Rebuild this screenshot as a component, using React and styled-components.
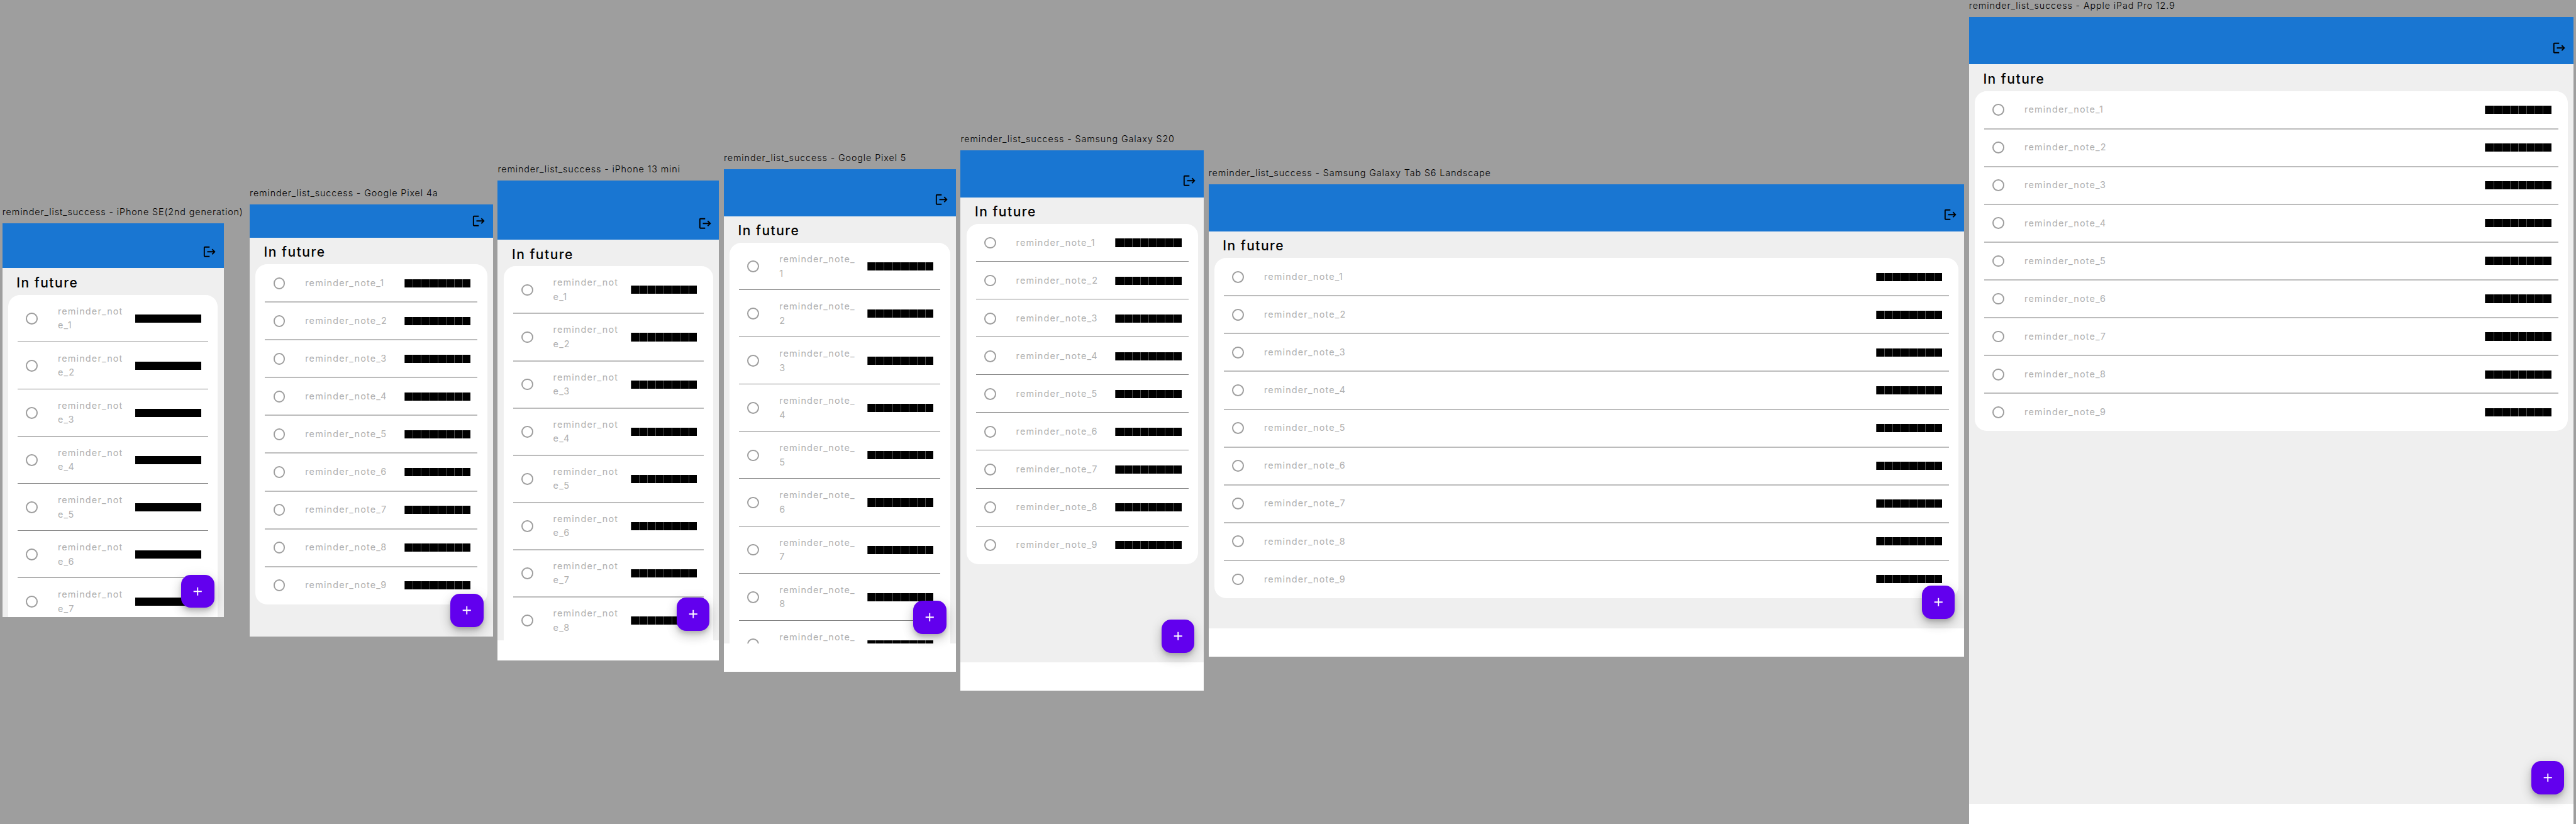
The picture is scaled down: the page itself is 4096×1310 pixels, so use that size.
import React from "react";
import styled, { createGlobalStyle } from "styled-components";

const SCALE = 4096 / 4363;
const u = (n) => `${+(n * SCALE).toFixed(3)}px`;

const GlobalStyle = createGlobalStyle`
  html, body { margin: 0; padding: 0; background: #9e9e9e; overflow: hidden; }
  * { box-sizing: border-box; }
`;

const Board = styled.main`
  display: flex;
  align-items: center;
  width: 4096px;
  height: 1309.6px;
  overflow: hidden;
  font-family: Inter, "Liberation Sans", sans-serif;
`;

const Scenario = styled.section`
  flex: none;
  width: ${(p) => u(p.$w)};
  padding: 0 ${u(4)};
`;

const Label = styled.h2`
  margin: 0;
  height: ${u(29)};
  font-size: ${u(15.3)};
  font-weight: 300;
  line-height: ${u(20)};
  letter-spacing: ${u(0.93)};
  white-space: nowrap;
  color: #000;
`;

const Screen = styled.div`
  position: relative;
  display: flex;
  flex-direction: column;
  width: ${(p) => u(p.$w)};
  height: ${(p) => u(p.$h)};
  background: #fff;
  overflow: hidden;
`;

const AppBar = styled.header`
  flex: none;
  display: flex;
  justify-content: flex-end;
  align-items: flex-end;
  height: ${(p) => u(p.$h)};
  padding: ${u(16)} ${u(12)};
  background: #1976d2;
  svg { display: block; width: ${u(24)}; height: ${u(24)}; }
`;

const Body = styled.div`
  flex: 1;
  min-height: 0;
  margin-bottom: ${(p) => u(p.$inset)};
  background: #efefef;
  overflow: hidden;
`;

const SectionTitle = styled.h3`
  margin: 0;
  height: ${u(45)};
  padding: ${u(8)} ${u(24)} 0;
  font-size: ${u(22.4)};
  font-weight: 500;
  line-height: ${u(35)};
  letter-spacing: ${u(1.6)};
  color: #000;
`;

const Card = styled.ul`
  list-style: none;
  margin: 0 ${u(10)};
  padding: 0;
  min-height: ${(p) => u(p.$h)};
  background: #fff;
  border-radius: ${u(20)};
`;

const Item = styled.li`
  display: flex;
  align-items: center;
  position: relative;
  height: ${(p) => u(p.$tall ? 80 : 64)};
  padding: 0 ${u(28)} 0 ${u(30)};
  & + &::before {
    content: "";
    position: absolute;
    top: -1px;
    left: ${u(16)};
    right: ${u(16)};
    height: ${(p) => (p.$soft ? 2 : 1)}px;
    background: ${(p) => (p.$soft ? "#bcbcbc" : "#808080")};
  }
`;

const Radio = styled.span`
  flex: none;
  width: ${u(20)};
  height: ${u(20)};
  border: 2px solid #9e9e9e;
  border-radius: 50%;
`;

const Note = styled.p`
  flex: 1;
  margin: 0 0 0 ${u(34)};
  font-size: ${u(15.4)};
  line-height: ${u(24)};
  letter-spacing: ${u(1.2)};
  color: #b0b0b0;
  white-space: pre;
`;

const Stamp = styled.span`
  flex: none;
  display: flex;
  width: ${u(112)};
  height: ${u(14)};
  background: #000;
`;

const Block = styled.i`
  flex: 1;
  border-left: ${(p) => (p.$seam ? "1px solid #505050" : "0")};
`;

const Fab = styled.button`
  position: absolute;
  right: ${u(16)};
  bottom: ${(p) => u(p.$bottom)};
  display: flex;
  align-items: center;
  justify-content: center;
  width: ${u(56)};
  height: ${u(56)};
  padding: 0;
  border: 0;
  border-radius: ${u(16)};
  background: #6200ee;
  box-shadow:
    0 ${u(5)} ${u(8)} ${u(-2)} rgba(0, 0, 0, 0.18),
    0 ${u(9)} ${u(18)} rgba(0, 0, 0, 0.16),
    0 ${u(4)} ${u(24)} rgba(0, 0, 0, 0.09);
  svg { display: block; width: ${u(24)}; height: ${u(24)}; }
`;

const devices = [
  { name: "iPhone SE(2nd generation)", col: 419, w: 375, h: 667, bar: 75.7, inset: 0, wrap: 12, rows: 7, fab: 16 },
  { name: "Google Pixel 4a", col: 420, w: 412, h: 731, bar: 56, inset: 0, wrap: 0, rows: 9, fab: 16, seam: true, soft: true },
  { name: "iPhone 13 mini", col: 383, w: 375, h: 812, bar: 100, inset: 34, wrap: 12, rows: 8, fab: 50, seam: true, soft: true },
  { name: "Google Pixel 5", col: 401, w: 393, h: 851, bar: 79.7, inset: 48, wrap: 14, rows: 9, fab: 64, seam: true },
  { name: "Samsung Galaxy S20", col: 420, w: 412, h: 915, bar: 79.7, inset: 48, wrap: 0, rows: 9, fab: 64, seam: true },
  { name: "Samsung Galaxy Tab S6 Landscape", col: 1288, w: 1280, h: 800, bar: 80, inset: 48, wrap: 0, rows: 9, fab: 64, seam: true, soft: true },
  { name: "Apple iPad Pro 12.9", col: 1032, w: 1024, h: 1366, bar: 80, inset: 34, wrap: 0, rows: 9, fab: 50, seam: true, soft: true },
];

function LogoutIcon() {
  return (
    <svg viewBox="0 0 24 24" fill="#000">
      <path d="M17 7l-1.41 1.41L18.17 11H8v2h10.17l-2.58 2.58L17 17l5-5zM4 5h8V3H4c-1.1 0-2 .9-2 2v14c0 1.1.9 2 2 2h8v-2H4V5z" />
    </svg>
  );
}

function Device({ d }) {
  const tall = d.wrap > 0;
  return (
    <Scenario $w={d.col}>
      <Label>{`reminder_list_success - ${d.name}`}</Label>
      <Screen $w={d.w} $h={d.h}>
        <AppBar $h={d.bar}><LogoutIcon /></AppBar>
        <Body $inset={d.inset}>
          <SectionTitle>In future</SectionTitle>
          <Card $h={tall ? 720 : 576}>
            {Array.from({ length: d.rows }, (_, i) => {
              const text = `reminder_note_${i + 1}`;
              return (
                <Item key={text} $tall={tall} $soft={d.soft}>
                  <Radio />
                  <Note>{tall ? `${text.slice(0, d.wrap)}\n${text.slice(d.wrap)}` : text}</Note>
                  <Stamp>
                    {Array.from({ length: 8 }, (_, k) => <Block key={k} $seam={d.seam} />)}
                  </Stamp>
                </Item>
              );
            })}
          </Card>
        </Body>
        <Fab $bottom={d.fab}>
          <svg viewBox="0 0 24 24" fill="#fff"><path d="M19 13h-6v6h-2v-6H5v-2h6V5h2v6h6v2z" /></svg>
        </Fab>
      </Screen>
    </Scenario>
  );
}

export default function App() {
  return (
    <>
      <GlobalStyle />
      <Board>
        {devices.map((d) => <Device key={d.name} d={d} />)}
      </Board>
    </>
  );
}
